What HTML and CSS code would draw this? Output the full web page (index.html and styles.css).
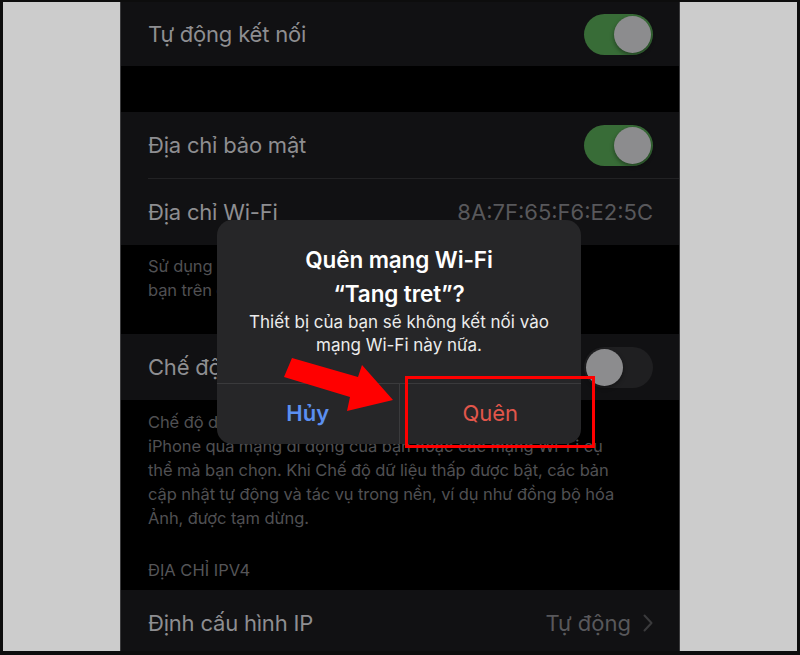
FILE: index.html
```html
<!DOCTYPE html>
<html lang="vi">
<head>
<meta charset="utf-8">
<title>Quên mạng Wi-Fi</title>
<link rel="stylesheet" href="styles.css">
</head>
<body>
<div class="frame">
  <div class="side"></div>
  <div class="phone">
    <div class="group">
      <div class="cell first">
        <span class="label">Tự động kết nối</span>
        <span class="toggle on"><span class="knob"></span></span>
      </div>
    </div>
    <div class="gap"></div>
    <div class="group">
      <div class="cell sep">
        <span class="label">Địa chỉ bảo mật</span>
        <span class="toggle on"><span class="knob"></span></span>
      </div>
      <div class="cell">
        <span class="label">Địa chỉ Wi-Fi</span>
        <span class="value">8A:7F:65:F6:E2:5C</span>
      </div>
    </div>
    <p class="footer f1">Sử dụng địa chỉ bảo mật giúp giảm theo dõi iPhone của<br>bạn trên các mạng Wi-Fi khác nhau.</p>
    <div class="group">
      <div class="cell">
        <span class="label">Chế độ dữ liệu thấp</span>
        <span class="toggle off"><span class="knob"></span></span>
      </div>
    </div>
    <p class="footer f2">Chế độ dữ liệu thấp giúp giảm mức sử dụng dữ liệu của<br>iPhone qua mạng di động của bạn hoặc các mạng Wi-Fi cụ<br>thể mà bạn chọn. Khi Chế độ dữ liệu thấp được bật, các bản<br>cập nhật tự động và tác vụ trong nền, ví dụ như đồng bộ hóa<br>Ảnh, được tạm dừng.</p>
    <div class="header">ĐỊA CHỈ IPV4</div>
    <div class="group">
      <div class="cell">
        <span class="label">Định cấu hình IP</span>
        <span class="value">Tự động <svg class="chev" width="10" height="18" viewBox="0 0 10 18"><polyline points="1.5,1.5 8.5,9 1.5,16.5" fill="none" stroke="currentColor" stroke-width="2" stroke-linecap="round" stroke-linejoin="round"/></svg></span>
      </div>
    </div>
  </div>
  <div class="side"></div>
</div>

<div class="alert">
  <div class="alert-body">
    <div class="alert-title">Quên mạng Wi-Fi<br>“Tang tret”?</div>
    <div class="alert-msg">Thiết bị của bạn sẽ không kết nối vào<br>mạng Wi-Fi này nữa.</div>
  </div>
  <div class="alert-actions">
    <div class="btn cancel">Hủy</div>
    <div class="btn destructive">Quên</div>
  </div>
</div>

<div class="highlight"></div>

<svg class="arrow" width="800" height="655" viewBox="0 0 800 655">
  <polygon points="292,358 358,377 362,365 393,400 347,411 350,397 284,377" fill="#ff0000"/>
</svg>
</body>
</html>
```

FILE: styles.css
```css
* { box-sizing: border-box; }

html, body {
  margin: 0;
  padding: 0;
}

body {
  position: relative;
  width: 800px;
  height: 655px;
  overflow: hidden;
  background: #0d0d0d;
  font-family: Inter, "Noto Sans", "DejaVu Sans", sans-serif;
}

.frame {
  display: flex;
  width: 800px;
  height: 655px;
  border-style: solid;
  border-color: #0d0d0d;
  border-width: 2px 3px 4px 3px;
  background: #cccccc;
}

.side {
  flex: 1;
  background: #cccccc;
}

.phone {
  width: 560px;
  flex: none;
  background: #000;
  border-left: 1px solid #3a3a3c;
  border-right: 1px solid #3a3a3c;
  overflow: hidden;
  display: flex;
  flex-direction: column;
}

.group {
  background: #111113;
  flex: none;
}

.cell {
  height: 66px;
  display: flex;
  align-items: center;
  justify-content: space-between;
  padding: 0 26px 0 27px;
  position: relative;
}

.cell.first {
  height: 64px;
}

.cell.sep {
  height: 67px;
  border-bottom: 1px solid #222224;
  margin-left: 27px;
  padding-left: 0;
}

.label {
  font-size: 22px;
  color: #8e8e91;
  letter-spacing: -0.2px;
}

.value {
  font-size: 22px;
  color: #58585b;
  letter-spacing: 0;
  display: flex;
  align-items: center;
  gap: 12px;
}

.chev {
  color: #3a3a3c;
}

.toggle {
  width: 69px;
  height: 41px;
  border-radius: 21px;
  position: relative;
  display: block;
}

.toggle.on {
  background: #386c37;
}

.toggle.off {
  background: #1f1f21;
}

.knob {
  position: absolute;
  top: 2px;
  width: 37px;
  height: 37px;
  border-radius: 50%;
  background: #8c8c8e;
  box-shadow: 0 2px 4px rgba(0, 0, 0, 0.4);
}

.toggle.on .knob { right: 2px; }
.toggle.off .knob { left: 2px; }

.gap {
  height: 46px;
  flex: none;
}

.footer {
  margin: 0;
  flex: none;
  font-size: 16.5px;
  line-height: 24px;
  color: #505053;
  padding: 9px 20px 32px 27px;
  white-space: nowrap;
  letter-spacing: -0.1px;
}

.footer.f2 {
  padding: 10px 20px 0 27px;
}

.header {
  flex: none;
  height: 60px;
  padding: 30px 27px 10px;
  font-size: 16.5px;
  line-height: 20px;
  color: #555558;
}

/* alert overlay */
.alert {
  position: absolute;
  left: 217px;
  top: 220px;
  width: 364px;
  height: 224px;
  background: #262628;
  border-radius: 15px;
  overflow: hidden;
  display: flex;
  flex-direction: column;
  color: #fff;
  text-align: center;
}

.alert-body {
  height: 164px;
  padding-top: 23px;
  border-bottom: 1px solid #3a3a3c;
}

.alert-title {
  font-size: 22.5px;
  font-weight: 600;
  line-height: 34px;
  letter-spacing: -0.1px;
}

.alert-msg {
  font-size: 17px;
  line-height: 23px;
  color: #ececec;
}

.alert-actions {
  flex: 1;
  display: flex;
}

.btn {
  flex: 1;
  display: flex;
  align-items: center;
  justify-content: center;
  font-size: 22px;
  padding-bottom: 2px;
}

.btn.cancel {
  color: #5b8ff0;
  font-weight: 600;
  border-right: 1px solid #3a3a3c;
}

.btn.destructive {
  color: #e2564b;
}

.highlight {
  position: absolute;
  left: 405px;
  top: 376px;
  width: 190px;
  height: 72px;
  border: 3px solid #ff0000;
}

.arrow {
  position: absolute;
  left: 0;
  top: 0;
}
```
